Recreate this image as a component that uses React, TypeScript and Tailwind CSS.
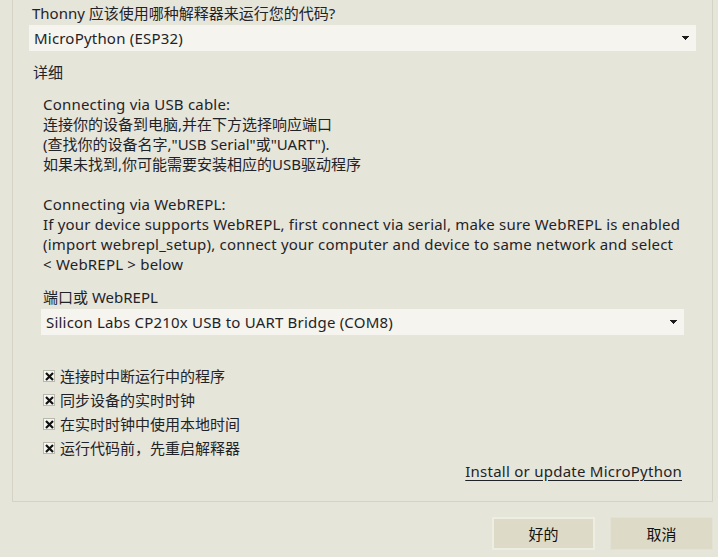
const font = "font-['Noto_Sans','Noto_Sans_CJK_SC',sans-serif]";

function Arrow() {
  return (
    <svg width="7" height="4" viewBox="0 0 7 4" className="shrink-0 mr-[3px]">
      <path d="M0 0H7V1H6V2H5V3H4V4H3V3H2V2H1V1H0Z" fill="#1c1c1c" />
    </svg>
  );
}

function Combo({ text, className }: { text: string; className: string }) {
  return (
    <div className={`flex items-center justify-between h-[26px] bg-[#f5f4ee] pl-[5px] pr-[4px] ${className}`}>
      <span className="tracking-[0.2px]">{text}</span>
      <Arrow />
    </div>
  );
}

function Check({ label }: { label: string }) {
  return (
    <div className="flex items-center h-[24px] gap-[5px]">
      <div className="w-[12px] h-[12px] border border-[#b9b8ad] bg-[#f7f7f2] flex items-center justify-center">
        <svg width="9" height="9" viewBox="0 0 9 9">
          <path d="M1 1L8 8M8 1L1 8" stroke="#111" strokeWidth="2.2" />
        </svg>
      </div>
      <span>{label}</span>
    </div>
  );
}

export default function App() {
  return (
    <div className={`w-[718px] h-[557px] bg-[#e6e5da] text-[15px] leading-[20px] text-[#1f2328] overflow-hidden ${font}`}>
      {/* details frame (top is cut off) */}
      <div className="ml-[12px] w-[701px] h-[502px] border-l border-r border-b border-[#d4d3c6] flex flex-col">
        <div className="pl-[19px] pt-[3px] h-[24px]">Thonny 应该使用哪种解释器来运行您的代码?</div>
        <Combo text="MicroPython (ESP32)" className="ml-[16px] w-[667px] mt-[1px]" />

        <div className="pl-[20px] mt-[11px] h-[20px]">详细</div>

        <div className="pl-[30px] mt-[12px]">
          <div className="tracking-[0.2px]">Connecting via USB cable:</div>
          <div>连接你的设备到电脑,并在下方选择响应端口</div>
          <div>(查找你的设备名字,"USB Serial"或"UART").</div>
          <div>如果未找到,你可能需要安装相应的USB驱动程序</div>
          <div className="h-[20px]"></div>
          <div className="tracking-[0.2px]">Connecting via WebREPL:</div>
          <div className="tracking-[0.2px]">If your device supports WebREPL, first connect via serial, make sure WebREPL is enabled</div>
          <div className="tracking-[0.2px]">(import webrepl_setup), connect your computer and device to same network and select</div>
          <div className="tracking-[0.2px]">&lt; WebREPL &gt; below</div>
        </div>

        <div className="pl-[30px] mt-[13px] h-[20px]">端口或 WebREPL</div>
        <Combo text="Silicon Labs CP210x USB to UART Bridge (COM8)" className="ml-[28px] w-[643px] mt-[2px]" />

        <div className="pl-[30px] mt-[29px] flex flex-col">
          <Check label="连接时中断运行中的程序" />
          <Check label="同步设备的实时时钟" />
          <Check label="在实时时钟中使用本地时间" />
          <Check label="运行代码前，先重启解释器" />
        </div>

        <div className="flex justify-end pr-[30px] mt-[1px] h-[20px]">
          <span className="underline underline-offset-[3px] tracking-[0.25px]">Install or update MicroPython</span>
        </div>
      </div>

      {/* buttons */}
      <div className="flex justify-end gap-[15px] pr-[5px] mt-[15px]">
        <button className="w-[103px] h-[33px] bg-[#dddbc8] border-2 border-[#eeede4] text-[#111]">好的</button>
        <button className="w-[103px] h-[33px] bg-[#dddbc8] border border-[#e2e1d4] text-[#111]">取消</button>
      </div>
    </div>
  );
}
